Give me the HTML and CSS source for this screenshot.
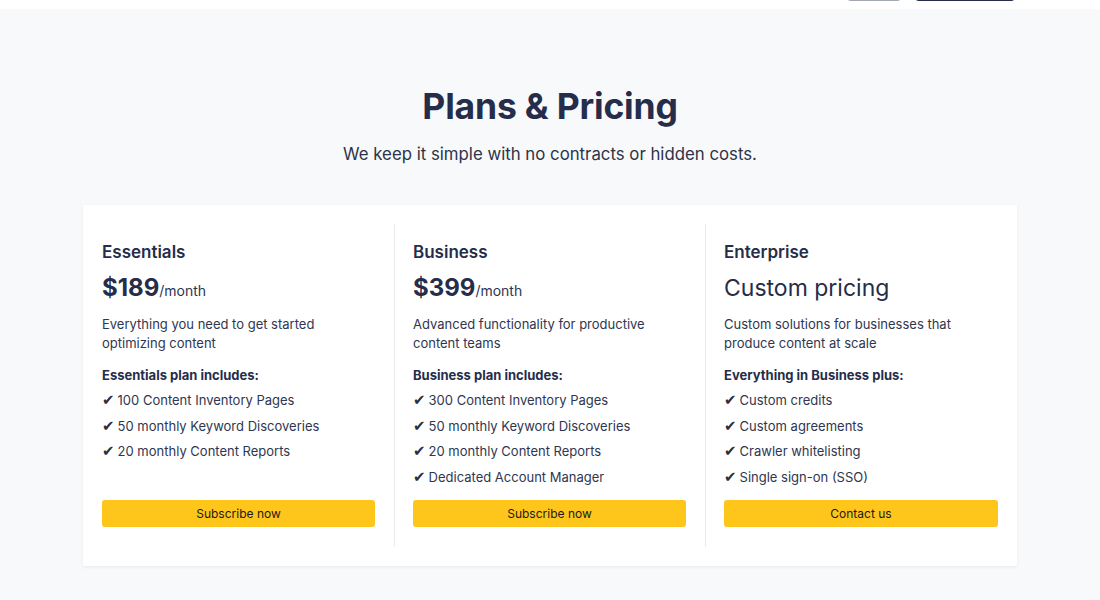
FILE: index.html
```html
<!DOCTYPE html>
<html lang="en">
<head>
  <meta charset="UTF-8"/>
  <meta name="viewport" content="width=device-width,initial-scale=1"/>
  <title>Plans &amp; Pricing</title>
  <link rel="stylesheet" href="styles.css">
</head>
<body>

  <!-- TOP BAR (scrolled, only button bottoms visible) -->
  <header class="topbar">
    <div class="tb-btn tb-ghost"></div>
    <div class="tb-btn tb-dark"></div>
  </header>

  <!-- PRICING -->
  <section class="pricing">
    <h1>Plans &amp; Pricing</h1>
    <p class="lead">We keep it simple with no contracts or hidden costs.</p>

    <div class="plans">
      <div class="plan">
        <h2>Essentials</h2>
        <div class="price">$189<span>/month</span></div>
        <p class="desc">Everything you need to get started optimizing content</p>
        <div class="incl">Essentials plan includes:</div>
        <ul class="features">
          <li>100 Content Inventory Pages</li>
          <li>50 monthly Keyword Discoveries</li>
          <li>20 monthly Content Reports</li>
        </ul>
        <button class="cta">Subscribe now</button>
      </div>

      <div class="plan">
        <h2>Business</h2>
        <div class="price">$399<span>/month</span></div>
        <p class="desc">Advanced functionality for productive content teams</p>
        <div class="incl">Business plan includes:</div>
        <ul class="features">
          <li>300 Content Inventory Pages</li>
          <li>50 monthly Keyword Discoveries</li>
          <li>20 monthly Content Reports</li>
          <li>Dedicated Account Manager</li>
        </ul>
        <button class="cta">Subscribe now</button>
      </div>

      <div class="plan">
        <h2>Enterprise</h2>
        <div class="price custom">Custom pricing</div>
        <p class="desc">Custom solutions for businesses that produce content at scale</p>
        <div class="incl">Everything in Business plus:</div>
        <ul class="features">
          <li>Custom credits</li>
          <li>Custom agreements</li>
          <li>Crawler whitelisting</li>
          <li>Single sign-on (SSO)</li>
        </ul>
        <button class="cta">Contact us</button>
      </div>
    </div>
  </section>

</body>
</html>
```

FILE: styles.css
```css
* { box-sizing: border-box; }
body {
  margin: 0;
  min-height: 100vh;
  font-family: Inter, 'Noto Sans', sans-serif;
  background: #f8f9fb;
  color: #2f3650;
}

/* top bar */
.topbar {
  height: 9px;
  background: #fff;
  overflow: hidden;
  display: flex;
  justify-content: flex-end;
  align-items: flex-end;
  gap: 14px;
  padding: 0 85px 8px 0;
}
.tb-btn {
  height: 36px;
  flex-shrink: 0;
  border-radius: 4px;
  background: #fff;
}
.tb-ghost {
  width: 54px;
  border: 2px solid #a4a8b2;
}
.tb-dark {
  width: 100px;
  border: 2px solid #262d45;
}

/* heading */
.pricing {
  padding: 76px 0 40px;
}
h1 {
  margin: 0;
  text-align: center;
  font-size: 35.5px;
  line-height: 43px;
  font-weight: 700;
  color: #252d4a;
  letter-spacing: -0.2px;
}
.lead {
  margin: 14px 0 0;
  text-align: center;
  font-size: 16.8px;
  line-height: 24px;
  color: #2c3349;
}

/* cards */
.plans {
  width: 934px;
  margin: 39px auto 0;
  background: #fff;
  box-shadow: 0 1px 3px rgba(30,40,70,0.08);
  padding: 19px 0;
  display: grid;
  grid-template-columns: 311px 311px 312px;
}
.plan {
  display: flex;
  flex-direction: column;
  padding: 16px 19px 20px;
}
.plan + .plan {
  border-left: 1px solid #e9ebef;
  padding-left: 18px;
}
h2 {
  margin: 0;
  font-size: 17px;
  line-height: 25px;
  font-weight: 600;
  color: #252d4a;
}
.price {
  margin-top: 7px;
  height: 32px;
  font-size: 24px;
  line-height: 32px;
  font-weight: 700;
  color: #252d4a;
}
.price span {
  font-size: 14px;
  line-height: 1;
  font-weight: 400;
  color: #2f3650;
}
.price.custom {
  font-weight: 400;
  font-size: 23px;
}
.desc {
  margin: 11px 0 0;
  font-size: 13px;
  line-height: 19px;
  padding-right: 30px;
}
.incl {
  margin-top: 13px;
  font-size: 13px;
  line-height: 19px;
  font-weight: 700;
  color: #252d4a;
}
.features {
  list-style: none;
  margin: 3px 0 10px;
  padding: 0;
}
.features li {
  font-size: 13px;
  line-height: 25.6px;
}
.features li::before {
  content: "\2714";
  font-family: 'DejaVu Sans', sans-serif;
  font-size: 15px;
  line-height: 1;
  color: #2a2f3d;
  margin-right: 3px;
}
.cta {
  margin-top: auto;
  width: 100%;
  height: 27px;
  border: none;
  border-radius: 3px;
  background: #fec61b;
  color: #1a1a1a;
  font: inherit;
  font-size: 12px;
  cursor: pointer;
}
```
